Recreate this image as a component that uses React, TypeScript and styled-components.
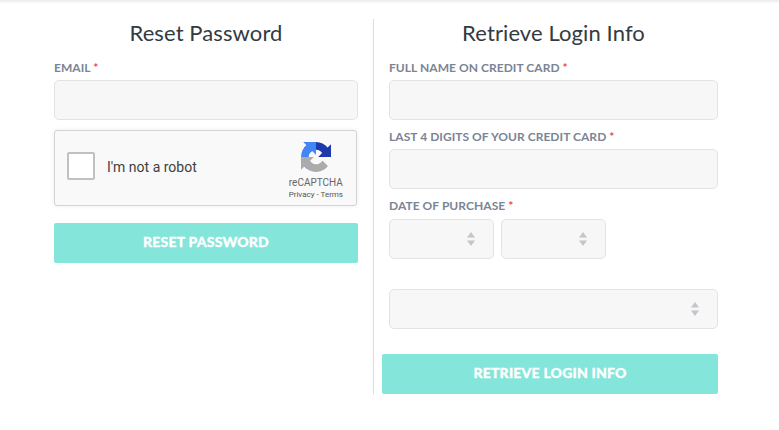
import React from "react";
import styled, { createGlobalStyle } from "styled-components";

const GlobalStyle = createGlobalStyle`
  html, body {
    margin: 0;
    padding: 0;
    background: #fff;
    font-family: Lato, "Open Sans", sans-serif;
  }
`;

const Field: React.FC<{ label: string }> = ({ label }) => (
  <FieldGroup>
    <FieldLabel>
      {label} <Required>*</Required>
    </FieldLabel>
    <TextInput />
  </FieldGroup>
);

const Arrows = () => (
  <ArrowIcon width="8" height="14" viewBox="0 0 8 14">
    <path d="M4 0 L8 5.5 L0 5.5 Z" fill="#c4c4cb" />
    <path d="M0 8.5 L8 8.5 L4 14 Z" fill="#c4c4cb" />
  </ArrowIcon>
);

const RecaptchaLogo = () => (
  <svg width="30" height="30" viewBox="0 0 64 64">
    <path
      d="M64 31.955l-.033-1.37V4.687l-7.16 7.16C50.948 4.674 42.033.093 32.05.093c-10.4 0-19.622 4.96-25.458 12.64l11.736 11.86a15.55 15.55 0 0 1 4.754-5.334c2.05-1.6 4.952-2.906 8.967-2.906.485 0 .86.057 1.135.163 4.976.393 9.288 3.14 11.828 7.124l-8.307 8.307 32.294.008"
      fill="#1c3aa9"
    />
    <path
      d="M31.95.001l-1.37.033H4.687l7.16 7.16C4.674 13.05.093 21.967.093 31.95c0 10.4 4.96 19.622 12.64 25.458l11.86-11.736a15.55 15.55 0 0 1-5.334-4.754c-1.6-2.05-2.906-4.952-2.906-8.967 0-.485.057-.86.163-1.135.393-4.976 3.14-9.288 7.124-11.828l8.307 8.307L31.95.001"
      fill="#4285f4"
    />
    <path
      d="M.001 32l.033 1.37v25.893l7.16-7.16c5.857 7.173 14.772 11.754 24.755 11.754 10.4 0 19.622-4.96 25.458-12.64L45.671 39.36a15.55 15.55 0 0 1-4.754 5.334c-2.05 1.6-4.952 2.906-8.967 2.906-.485 0-.86-.057-1.135-.163-4.976-.393-9.288-3.14-11.828-7.124l8.307-8.307L.001 32"
      fill="#ababab"
    />
  </svg>
);

const App: React.FC = () => {
  return (
    <>
      <GlobalStyle />
      <TopShade />
      <Page>
        <LeftColumn>
          <Heading>Reset Password</Heading>
          <Field label="EMAIL" />
          <Captcha>
            <CheckBox />
            <CaptchaText>I'm not a robot</CaptchaText>
            <CaptchaBrand>
              <RecaptchaLogo />
              <BrandName>reCAPTCHA</BrandName>
              <BrandLinks>Privacy - Terms</BrandLinks>
            </CaptchaBrand>
          </Captcha>
          <ResetButton>RESET PASSWORD</ResetButton>
        </LeftColumn>
        <RightColumn>
          <Heading>Retrieve Login Info</Heading>
          <Field label="FULL NAME ON CREDIT CARD" />
          <Field label="LAST 4 DIGITS OF YOUR CREDIT CARD" />
          <FieldGroup>
            <FieldLabel>
              DATE OF PURCHASE <Required>*</Required>
            </FieldLabel>
            <DateRow>
              <SelectBox>
                <Arrows />
              </SelectBox>
              <SelectBox>
                <Arrows />
              </SelectBox>
            </DateRow>
          </FieldGroup>
          <WideSelect>
            <Arrows />
          </WideSelect>
          <RetrieveButton>RETRIEVE LOGIN INFO</RetrieveButton>
        </RightColumn>
      </Page>
    </>
  );
};

export default App;

const TopShade = styled.div`
  height: 3px;
  background: linear-gradient(#ececec, #fafafa);
`;

const Page = styled.div`
  display: flex;
  width: 779px;
  padding: 16px 0 0 54px;
  box-sizing: border-box;
`;

const LeftColumn = styled.div`
  width: 304px;
  margin-right: 15px;
`;

const RightColumn = styled.div`
  width: 329px;
  height: 375px;
  padding-left: 15px;
  border-left: 1px solid #dddddd;
`;

const Heading = styled.h2`
  margin: 0;
  height: 28px;
  padding-bottom: 13px;
  font-family: Lato, sans-serif;
  font-size: 22px;
  line-height: 28px;
  font-weight: 400;
  letter-spacing: 0.1px;
  text-align: center;
  color: #333a42;
`;

const FieldGroup = styled.div`
  display: flex;
  flex-direction: column;
  margin-bottom: 9px;
`;

const FieldLabel = styled.label`
  height: 20px;
  font-family: Lato, sans-serif;
  font-size: 12px;
  line-height: 15px;
  font-weight: 700;
  letter-spacing: 0.05px;
  color: #7b8494;
`;

const Required = styled.span`
  color: #e8474f;
`;

const TextInput = styled.input`
  display: block;
  width: 100%;
  height: 40px;
  box-sizing: border-box;
  background: #f7f7f7;
  border: 1px solid #e3e3e3;
  border-radius: 5px;
  outline: none;
`;

const Captcha = styled.div`
  display: flex;
  align-items: center;
  width: 303px;
  height: 76px;
  margin-top: 10px;
  box-sizing: border-box;
  padding: 0 13px 4px 12px;
  background: #f9f9f9;
  border: 1px solid #d3d3d3;
  border-radius: 3px;
  box-shadow: 0 0 4px rgba(0, 0, 0, 0.08);
`;

const CheckBox = styled.div`
  width: 28px;
  height: 28px;
  box-sizing: border-box;
  background: #fff;
  border: 2px solid #c1c1c1;
  border-radius: 2px;
`;

const CaptchaText = styled.span`
  margin: 2px 0 0 12px;
  font-family: Roboto, sans-serif;
  font-size: 14px;
  color: #3f3f3f;
`;

const CaptchaBrand = styled.div`
  display: flex;
  flex-direction: column;
  align-items: center;
  margin-left: auto;
  padding-top: 10px;
`;

const BrandName = styled.span`
  margin-top: 4px;
  font-family: Roboto, sans-serif;
  font-size: 10px;
  line-height: 13px;
  color: #666;
`;

const BrandLinks = styled.span`
  font-family: Roboto, sans-serif;
  font-size: 8px;
  line-height: 12px;
  color: #555;
`;

const PrimaryButton = styled.button`
  display: block;
  height: 40px;
  padding: 0 0 3px;
  background: #84e5da;
  border: none;
  border-radius: 2px;
  color: #fff;
  font-family: Lato, sans-serif;
  font-size: 14px;
  font-weight: 900;
  letter-spacing: 0.2px;
  -webkit-text-stroke: 0.3px #fff;
`;

const ResetButton = styled(PrimaryButton)`
  width: 304px;
  margin-top: 17px;
`;

const RetrieveButton = styled(PrimaryButton)`
  width: 336px;
  margin: 25px 0 0 -7px;
`;

const DateRow = styled.div`
  display: flex;
  gap: 7px;
  margin-top: 1px;
`;

const SelectBox = styled.div`
  display: flex;
  align-items: center;
  justify-content: flex-end;
  width: 105px;
  height: 40px;
  box-sizing: border-box;
  padding-right: 18px;
  background: #f7f7f7;
  border: 1px solid #e3e3e3;
  border-radius: 5px;
`;

const WideSelect = styled(SelectBox)`
  width: 100%;
  margin-top: 30px;
`;

const ArrowIcon = styled.svg`
  display: block;
`;
